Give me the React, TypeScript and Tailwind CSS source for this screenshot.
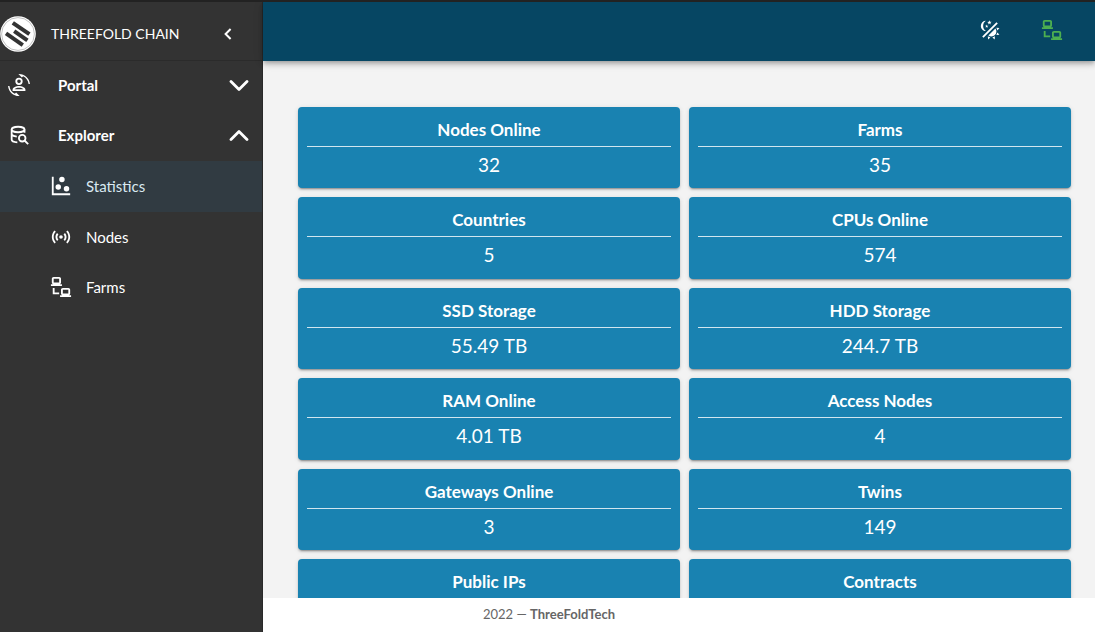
import React, { useState } from "react";

const ICONS = {
  accessPoint:
    "M4.93,4.93C3.12,6.74 2,9.24 2,12C2,14.76 3.12,17.26 4.93,19.07L6.34,17.66C4.89,16.22 4,14.22 4,12C4,9.79 4.89,7.78 6.34,6.34L4.93,4.93M19.07,4.93L17.66,6.34C19.11,7.79 20,9.79 20,12C20,14.22 19.11,16.22 17.66,17.66L19.07,19.07C20.88,17.26 22,14.76 22,12C22,9.24 20.88,6.74 19.07,4.93M7.76,7.76C6.67,8.85 6,10.35 6,12C6,13.65 6.67,15.15 7.76,16.24L9.17,14.83C8.45,14.11 8,13.11 8,12C8,10.89 8.45,9.89 9.17,9.17L7.76,7.76M16.24,7.76L14.83,9.17C15.55,9.89 16,10.89 16,12C16,13.11 15.55,14.11 14.83,14.83L16.24,16.24C17.33,15.15 18,13.65 18,12C18,10.35 17.33,8.85 16.24,7.76M12,10A2,2 0 0,0 10,12A2,2 0 0,0 12,14A2,2 0 0,0 14,12A2,2 0 0,0 12,10Z",
  scatter:
    "M2,2H4V20H22V22H2V2M9,10A3,3 0 0,1 12,13A3,3 0 0,1 9,16A3,3 0 0,1 6,13A3,3 0 0,1 9,10M13,2A3,3 0 0,1 16,5A3,3 0 0,1 13,8A3,3 0 0,1 10,5A3,3 0 0,1 13,2M18,12A3,3 0 0,1 21,15A3,3 0 0,1 18,18A3,3 0 0,1 15,15A3,3 0 0,1 18,12Z",
  lan: "M4,1C2.89,1 2,1.89 2,3V7C2,8.11 2.89,9 4,9H1V11H13V9H10C11.11,9 12,8.11 12,7V3C12,1.89 11.11,1 10,1H4M4,3H10V7H4V3M3,13V18L3,20H10V18H5V13H3M14,13C12.89,13 12,13.89 12,15V19C12,20.11 12.89,21 14,21H11V23H23V21H20C21.11,21 22,20.11 22,19V15C22,13.89 21.11,13 20,13H14M14,15H20V19H14V15Z",
  theme:
    "M7.5,2C5.71,3.15 4.5,5.18 4.5,7.5C4.5,9.82 5.71,11.85 7.53,13C4.46,13 2,10.54 2,7.5A5.5,5.5 0 0,1 7.5,2M19.07,3.5L20.5,4.93L4.93,20.5L3.5,19.07L19.07,3.5M12.89,5.93L11.41,5L9.97,6L10.39,4.3L9,3.24L10.75,3.12L11.33,1.47L12,3.1L13.73,3.13L12.38,4.26L12.89,5.93M9.59,9.54L8.43,8.81L7.31,9.59L7.65,8.27L6.56,7.44L7.92,7.35L8.37,6.06L8.88,7.33L10.24,7.36L9.19,8.23L9.59,9.54M19,13.5A5.5,5.5 0 0,1 13.5,19C12.28,19 11.15,18.6 10.24,17.93L17.93,10.24C18.6,11.15 19,12.28 19,13.5M14.6,20.08L17.37,18.93L17.13,22.28L14.6,20.08M18.93,17.38L20.08,14.61L22.28,17.15L18.93,17.38M20.08,12.42L18.94,9.64L22.28,9.88L20.08,12.42M9.63,18.93L12.4,20.08L9.87,22.27L9.63,18.93Z",
};

function Icon({ d }: { d: string }) {
  return (
    <svg viewBox="0 0 24 24" className="size-[22px] shrink-0" fill="currentColor" aria-hidden="true">
      <path d={d} />
    </svg>
  );
}

function PortalIcon() {
  return (
    <svg viewBox="0 0 24 24" className="size-[22px] shrink-0" fill="currentColor" aria-hidden="true">
      <path d="M7.5,21.5L8.85,20.16L12.66,23.97L12,24C5.71,24 0.56,19.16 0.05,13H1.55C1.91,16.76 4.25,19.94 7.5,21.5M16.5,2.5L15.15,3.84L11.34,0.03L12,0C18.29,0 23.44,4.84 23.95,11H22.45C22.09,7.24 19.75,4.07 16.5,2.5" />
      <path
        fillRule="evenodd"
        d="M12,4A4,4 0 0,1 16,8A4,4 0 0,1 12,12A4,4 0 0,1 8,8A4,4 0 0,1 12,4M12,6A2,2 0 0,0 10,8A2,2 0 0,0 12,10A2,2 0 0,0 14,8A2,2 0 0,0 12,6M12,13C14.67,13 19,14.33 19,17V18.5H5V17C5,14.33 9.33,13 12,13M12,15C9.6,15 7.6,15.8 7.2,16.5H16.8C16.4,15.8 14.4,15 12,15Z"
      />
    </svg>
  );
}

function ExplorerIcon() {
  return (
    <svg viewBox="0 0 24 24" className="size-[22px] shrink-0" fill="none" stroke="currentColor" strokeWidth="2" aria-hidden="true">
      <ellipse cx="11" cy="6" rx="7" ry="3" />
      <path d="M4 6V17C4 18.6 6.6 19.9 10.2 20M18 6V9.5M4 11.6C5 12.8 7 13.4 9.6 13.7" />
      <circle cx="15.5" cy="15.5" r="3.6" />
      <path d="M18 18L22 22" />
    </svg>
  );
}

function Chevron({ up }: { up?: boolean }) {
  return (
    <svg viewBox="0 0 20 12" className="h-3 w-5" fill="none" stroke="currentColor" strokeWidth="2.8" strokeLinecap="round" strokeLinejoin="round" aria-hidden="true">
      <path d={up ? "M2 10.5L10 2.5L18 10.5" : "M2 2.5L10 10.5L18 2.5"} />
    </svg>
  );
}

function Logo() {
  return (
    <svg viewBox="0 0 36 36" className="size-9 shrink-0" aria-hidden="true">
      <circle cx="18" cy="18" r="17.8" fill="#fff" />
      <circle cx="18" cy="18" r="16.4" fill="none" stroke="#999" strokeWidth="0.6" />
      <g stroke="#333" strokeWidth="4">
        <path d="M12.8 6.8L29.4 18.2" />
        <path d="M14.2 15.2L27.4 24.4" />
        <path d="M6 17.4L22.8 29.2" />
      </g>
    </svg>
  );
}

const STATS = [
  ["Nodes Online", "32"],
  ["Farms", "35"],
  ["Countries", "5"],
  ["CPUs Online", "574"],
  ["SSD Storage", "55.49 TB"],
  ["HDD Storage", "244.7 TB"],
  ["RAM Online", "4.01 TB"],
  ["Access Nodes", "4"],
  ["Gateways Online", "3"],
  ["Twins", "149"],
  ["Public IPs", ""],
  ["Contracts", ""],
];

const LINKS = [
  { label: "Statistics", icon: ICONS.scatter },
  { label: "Nodes", icon: ICONS.accessPoint },
  { label: "Farms", icon: ICONS.lan },
];

function Group({ label, icon, open, onToggle }: { label: string; icon: React.ReactNode; open: boolean; onToggle: () => void }) {
  return (
    <button type="button" aria-expanded={open} onClick={onToggle} className="flex h-[50px] w-full items-center pr-[13px] pb-0.5 pl-2 text-left">
      {icon}
      <span className="flex-1 pl-7 text-[15px] font-bold">{label}</span>
      <Chevron up={open} />
    </button>
  );
}

export default function App() {
  const [portal, setPortal] = useState(false);
  const [explorer, setExplorer] = useState(true);
  const [active, setActive] = useState("Statistics");

  return (
    <div className="flex h-screen flex-col overflow-hidden border-t-2 border-[#222] bg-white font-['Lato',sans-serif]">
      <div className="flex min-h-0 flex-1">
        <aside className="flex w-[263px] shrink-0 flex-col border-r border-[#292929] bg-[#333] text-white">
          <div className="flex h-[59px] items-center border-b border-[#2b2b2b] pt-1.5 pr-[26px]">
            <Logo />
            <span className="flex-1 pl-[15px] text-sm">THREEFOLD CHAIN</span>
            <button type="button" aria-label="Collapse menu" className="flex size-4 items-center justify-center">
              <svg viewBox="0 0 8 12" className="h-3 w-2" fill="none" stroke="currentColor" strokeWidth="2" aria-hidden="true">
                <path d="M6.6 1L1.6 6L6.6 11" />
              </svg>
            </button>
          </div>
          <nav>
            <Group label="Portal" icon={<PortalIcon />} open={portal} onToggle={() => setPortal(!portal)} />
            <Group label="Explorer" icon={<ExplorerIcon />} open={explorer} onToggle={() => setExplorer(!explorer)} />
            {explorer &&
              LINKS.map((link) => (
                <a
                  key={link.label}
                  href={"#" + link.label.toLowerCase()}
                  onClick={() => setActive(link.label)}
                  className={
                    active === link.label
                      ? "flex items-center gap-[14px] bg-[#313b42] py-[14px] pl-[50px] text-[15px] leading-normal text-[#d9e9f1]"
                      : "flex items-center gap-[14px] py-[14px] pl-[50px] text-[15px] leading-normal"
                  }
                >
                  <span className="text-white">
                    <Icon d={link.icon} />
                  </span>
                  {link.label}
                </a>
              ))}
          </nav>
        </aside>

        <div className="flex min-w-0 flex-1 flex-col">
          <header className="z-10 flex h-[59px] shrink-0 items-center justify-end gap-10 bg-[#064663] pr-8 pb-[3px] shadow-[0_2px_4px_-1px_rgba(0,0,0,0.2),0_4px_5px_rgba(0,0,0,0.14),0_1px_10px_rgba(0,0,0,0.12)]">
            <button type="button" aria-label="Toggle theme" className="text-white">
              <Icon d={ICONS.theme} />
            </button>
            <button type="button" aria-label="Connection" className="text-[#4caf50]">
              <Icon d={ICONS.lan} />
            </button>
          </header>
          <main className="min-h-0 flex-1 overflow-hidden bg-[#f3f3f3] pt-[46px] pr-6 pl-[35px]">
            <div className="grid grid-cols-2 gap-[9px]">
              {STATS.map(([title, value]) => (
                <section
                  key={title}
                  className="rounded bg-[#1982b1] px-[9px] pt-[10px] pb-2 text-center text-white shadow-[0_3px_1px_-2px_rgba(0,0,0,0.2),0_2px_2px_rgba(0,0,0,0.14),0_1px_5px_rgba(0,0,0,0.12)]"
                >
                  <h2 className="border-b border-[#d1e6ef] pb-[3px] text-[17px] leading-[26px] font-bold">{title}</h2>
                  <p className="min-h-8 pt-[3px] text-[19px] leading-[1.6]">{value}</p>
                </section>
              ))}
            </div>
          </main>
          <footer className="flex h-[34px] shrink-0 items-center justify-center bg-white pr-[260px] text-[13px] text-[#666]">
            <span>
              2022 — <strong>ThreeFoldTech</strong>
            </span>
          </footer>
        </div>
      </div>
    </div>
  );
}
